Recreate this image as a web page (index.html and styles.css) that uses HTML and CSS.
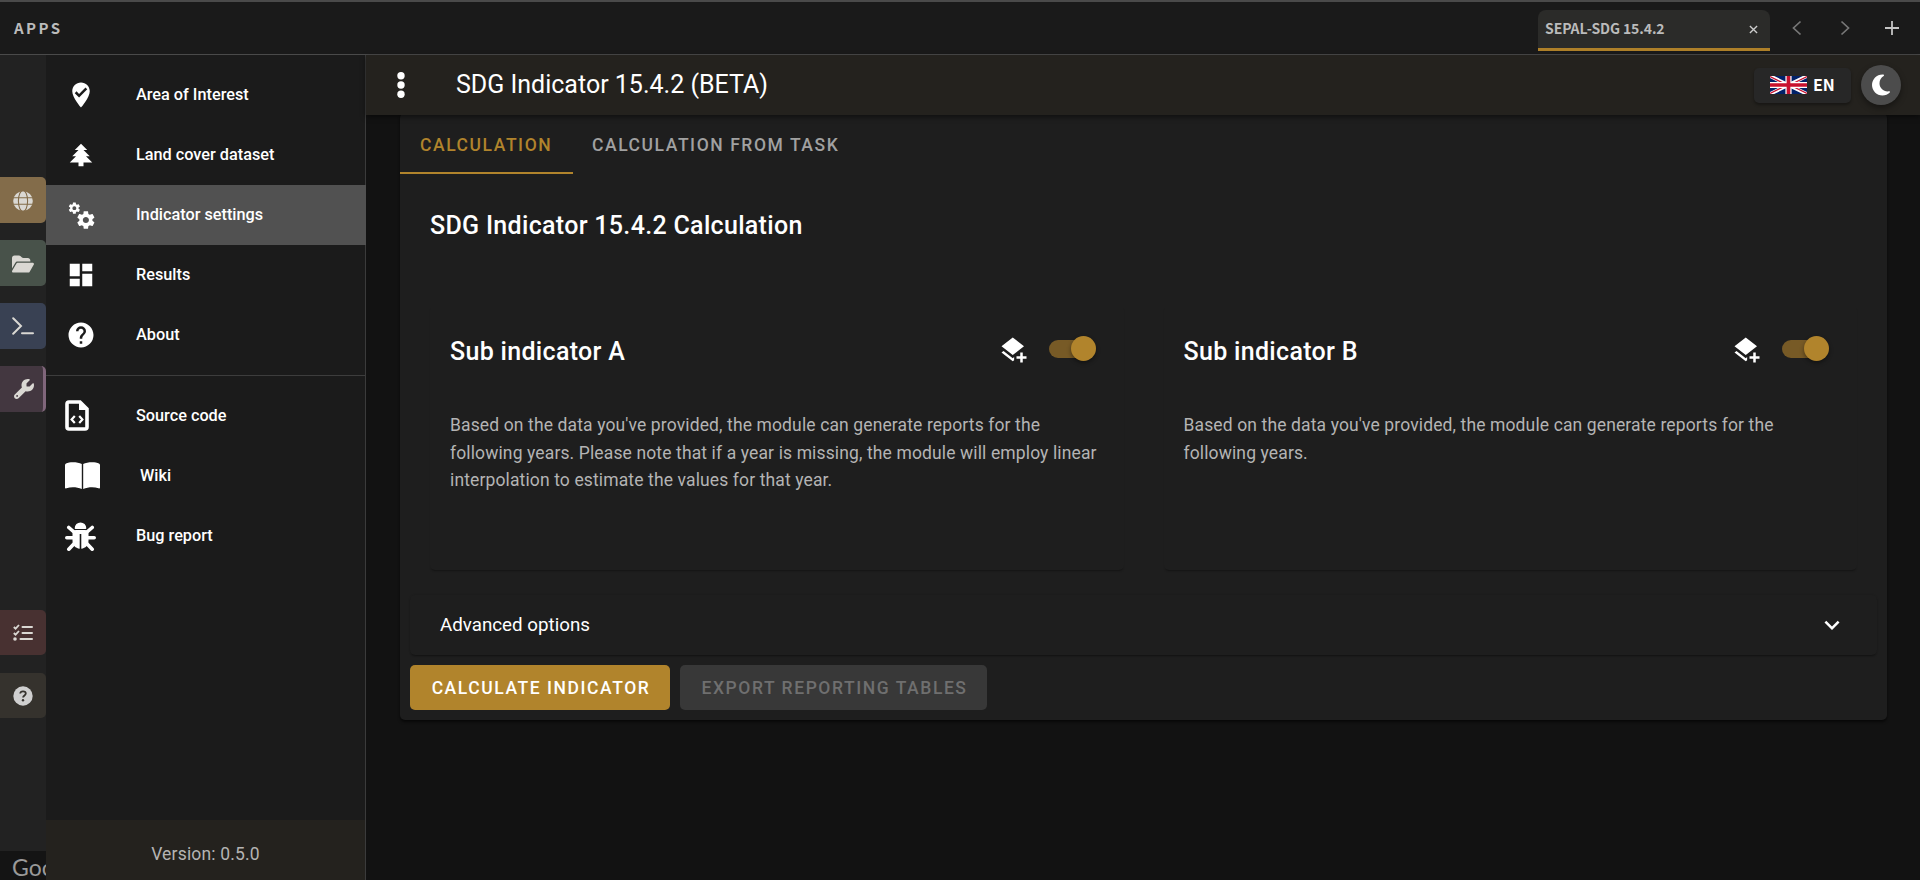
FILE: index.html
```html
<!DOCTYPE html>
<html lang="en">
<head>
<meta charset="utf-8">
<title>SEPAL - SDG Indicator 15.4.2</title>
<link rel="stylesheet" href="styles.css">
</head>
<body>
<header class="topbar">
  <div class="topbar-title">APPS</div>
  <div class="topbar-tabs">
    <div class="app-tab"><span>SEPAL-SDG 15.4.2</span>
      <svg class="close" viewBox="0 0 10 10"><path d="M1 1l8 8M9 1l-8 8"/></svg>
    </div>
    <svg class="nav-arrow" viewBox="0 0 10 16"><path d="M8.500 1.500L1.500 8l7 6.500"/></svg>
    <svg class="nav-arrow next" viewBox="0 0 10 16"><path d="M1.500 1.500L8.500 8l-7 6.500"/></svg>
    <svg class="plus" viewBox="0 0 14 14"><path d="M7 0v14M0 7h14"/></svg>
  </div>
</header>
<div class="workspace">
  <aside class="rail">
    <div class="rail-group">
      <div class="tile globe"><svg viewBox="0 0 20 20"><circle cx="10" cy="10" r="9.800" fill="#dad8d3"/><g fill="none" stroke="#836c4a" stroke-width="1.100"><ellipse cx="10" cy="10" rx="4.600" ry="10.500"/><path d="M0 6.700h20M0 13.300h20"/></g></svg></div>
      <div class="tile folder"><svg viewBox="0 0 576 512"><path fill="#dad8d3" d="M88.700 223.800L0 375.800V96c0-35.300 28.700-64 64-64h117.500c17 0 33.300 6.700 45.300 18.700l26.500 26.500c12 12 28.300 18.700 45.300 18.700H416c35.300 0 64 28.700 64 64v32H144c-22.800 0-43.800 12.100-55.300 31.800zm27.600 16.100C122.100 230 132.600 224 144 224h400c11.500 0 22 6.100 27.700 16.100s5.700 22.200-.1 32.100l-112 192C453.900 474 443.400 480 432 480H32c-11.500 0-22-6.100-27.700-16.100s-5.700-22.200.1-32.100l112-192z"/></svg></div>
      <div class="tile terminal"><svg viewBox="0 0 22 20"><path d="M1.200 2.200L9 10l-7.800 7.800M10 17.200h11" fill="none" stroke="#dad8d3" stroke-width="2" stroke-linecap="round"/></svg></div>
      <div class="tile wrench"><svg viewBox="0 0 512 512"><path fill="#dad8d3" d="M352 320c88.400 0 160-71.600 160-160 0-15.300-2.200-30.100-6.200-44.200-3.100-10.800-16.400-13.200-24.300-5.300l-76.800 76.800c-3 3-7.100 4.700-11.300 4.700H336c-8.800 0-16-7.200-16-16v-57.400c0-4.200 1.700-8.300 4.700-11.300l76.800-76.800c7.900-7.900 5.400-21.200-5.300-24.300C382.100 2.200 367.300 0 352 0c-88.400 0-160 71.600-160 160 0 19.100 3.400 37.500 9.500 54.500L19.900 396.100C7.200 408.800 0 426.100 0 444.100 0 481.600 30.400 512 67.900 512c18 0 35.300-7.200 48-19.900l181.600-181.600c17 6.200 35.400 9.500 54.500 9.500zM80 408a24 24 0 1 1 0 48 24 24 0 1 1 0-48z"/></svg></div>
    </div>
    <div class="rail-group lower">
      <div class="tile tasks"><svg viewBox="0 0 20 20"><g fill="none" stroke="#dad8d3" stroke-width="1.800"><path d="M.8 4l1.800 1.700L6 2M.8 10l1.800 1.700L6 8"/><path d="M9.500 4h9.500M9.500 10h9.500M7.500 16h11.500" stroke-linecap="round" stroke-width="2"/></g><circle cx="2" cy="16" r="1.800" fill="#dad8d3"/></svg></div>
      <div class="tile help"><svg viewBox="0 0 20 20"><circle cx="10" cy="10" r="9.700" fill="#cfcfcf"/><path d="M7.200 7.500c.2-1.600 1.300-2.200 2.800-2.200 1.700 0 2.800.8 2.800 2.200 0 1.900-2.700 2-2.700 4" fill="none" stroke="#35322d" stroke-width="1.800"/><circle cx="10" cy="14.300" r="1.200" fill="#35322d"/></svg></div>
    </div>
    <div class="map-credit">Google</div>
  </aside>
  <nav class="drawer">
    <ul class="menu pages">
      <li><i><svg class="mdi" viewBox="0 0 24 24"><path d="M12,2C15.860,2 19,5.140 19,9C19,14.250 12,22 12,22C12,22 5,14.250 5,9C5,5.140 8.140,2 12,2M10.470,14L17,7.410L15.600,6L10.470,11.180L8.400,9.090L7,10.500L10.470,14Z"/></svg></i>Area of Interest</li>
      <li><i><svg class="mdi" viewBox="0 0 24 24"><path d="M10,21V18H3L8,13H5L10,8H7L12,3L17,8H14L19,13H16L21,18H14V21H10Z"/></svg></i>Land cover dataset</li>
      <li class="active"><i><svg class="mdi" viewBox="0 0 24 24"><path d="M15.900,18.450C17.250,18.450 18.350,17.350 18.350,16C18.350,14.650 17.250,13.550 15.900,13.550C14.540,13.550 13.450,14.650 13.450,16C13.450,17.350 14.540,18.450 15.900,18.450M21.100,16.680L22.580,17.840C22.710,17.950 22.750,18.130 22.660,18.290L21.260,20.710C21.170,20.860 21,20.920 20.830,20.860L19.090,20.160C18.730,20.440 18.330,20.670 17.910,20.850L17.640,22.700C17.620,22.870 17.470,23 17.300,23H14.500C14.320,23 14.180,22.870 14.150,22.700L13.890,20.850C13.460,20.670 13.070,20.440 12.710,20.160L10.960,20.860C10.810,20.920 10.620,20.860 10.540,20.710L9.140,18.290C9.050,18.130 9.090,17.950 9.220,17.840L10.700,16.680L10.650,16L10.700,15.310L9.220,14.160C9.090,14.050 9.050,13.860 9.140,13.710L10.540,11.290C10.620,11.130 10.810,11.070 10.960,11.130L12.710,11.840C13.070,11.560 13.460,11.320 13.890,11.150L14.150,9.290C14.180,9.130 14.320,9 14.500,9H17.300C17.470,9 17.620,9.130 17.640,9.290L17.910,11.150C18.330,11.320 18.730,11.560 19.090,11.840L20.830,11.130C21,11.070 21.170,11.130 21.260,11.290L22.660,13.710C22.750,13.860 22.710,14.050 22.580,14.160L21.100,15.310L21.150,16L21.100,16.680M6.690,8.070C7.560,8.070 8.260,7.370 8.260,6.500C8.260,5.630 7.560,4.920 6.690,4.920A1.580,1.580 0 0,0 5.110,6.500C5.110,7.370 5.820,8.070 6.690,8.070M10.030,6.940L11,7.680C11.070,7.750 11.090,7.870 11.030,7.970L10.130,9.530C10.080,9.630 9.960,9.670 9.860,9.630L8.740,9.180L8,9.620L7.810,10.810C7.790,10.920 7.700,11 7.590,11H5.790C5.670,11 5.580,10.920 5.560,10.810L5.400,9.620L4.640,9.180L3.520,9.630C3.410,9.670 3.300,9.630 3.240,9.530L2.340,7.970C2.280,7.870 2.310,7.750 2.390,7.680L3.340,6.940L3.310,6.500L3.340,6.060L2.390,5.320C2.310,5.250 2.280,5.130 2.340,5.030L3.240,3.470C3.300,3.370 3.410,3.330 3.520,3.370L4.640,3.820L5.400,3.380L5.560,2.190C5.580,2.080 5.670,2 5.790,2H7.590C7.700,2 7.790,2.080 7.810,2.190L8,3.380L8.740,3.820L9.860,3.370C9.960,3.330 10.080,3.370 10.130,3.470L11.030,5.030C11.090,5.130 11.070,5.250 11,5.320L10.030,6.060L10.060,6.500L10.030,6.940Z"/></svg></i>Indicator settings</li>
      <li><i><svg class="mdi" viewBox="0 0 24 24"><path d="M13,3V9H21V3M13,21H21V11H13M3,21H11V15H3M3,13H11V3H3V13Z"/></svg></i>Results</li>
      <li><i><svg class="mdi" viewBox="0 0 24 24"><path d="M15.070,11.250L14.170,12.170C13.450,12.890 13,13.500 13,15H11V14.500C11,13.390 11.450,12.390 12.170,11.670L13.410,10.410C13.780,10.050 14,9.550 14,9C14,7.890 13.100,7 12,7A2,2 0 0,0 10,9H8A4,4 0 0,1 12,5A4,4 0 0,1 16,9C16,9.880 15.640,10.670 15.070,11.250M13,19H11V17H13M12,2A10,10 0 0,0 2,12A10,10 0 0,0 12,22A10,10 0 0,0 22,12C22,6.470 17.500,2 12,2Z"/></svg></i>About</li>
    </ul>
    <ul class="menu links">
      <li><i><svg width="24" height="31" viewBox="0 0 24 31"><path d="M4 2h11l7 7v18a2 2 0 0 1-2 2H4a2 2 0 0 1-2-2V4a2 2 0 0 1 2-2z" fill="none" stroke="#fff" stroke-width="3.600"/><path d="M14 2v8h8.500l-1-2-5.500-5z"/><path d="M9.800 16l-3.200 3.500 3.200 3.500M14.200 16l3.200 3.500-3.200 3.500" fill="none" stroke="#fff" stroke-width="2.200"/></svg></i>Source code</li>
      <li><i><svg width="35" height="27" viewBox="0 0 35 27"><path d="M16.800 2C13 0 5 -.5 1 1.500Q0 2 0 3v22.500q0 1.300 1.500 .8C6 24.700 12 25 16.800 27zM18.200 2C22 0 30 -.5 34 1.500q1 .5 1 1.500v22.500q0 1.300-1.500 .8C29 24.700 23 25 18.200 27z"/></svg></i><span class="wiki">Wiki</span></li>
      <li><i><svg width="31" height="31" viewBox="0 0 31 31"><path d="M9.700 8.200a5.800 5.800 0 0 1 11.600 0q0 .8-.8 .8h-10q-.8 0-.8-.8z"/><path d="M7.500 13.500q0-3.500 3.500-3.500h9q3.500 0 3.500 3.500v7c0 5-3 7.500-7.200 8.300V14h-1.600v14.800C10.500 28 7.500 25.500 7.500 20.500z"/><path d="M3.800 7.500L9 12M27.200 7.500L22 12M1.800 17.800h6.700M22.500 17.800h6.700M3.800 29.200l5.700-6M27.200 29.200l-5.700-6" fill="none" stroke="#fff" stroke-width="3.600" stroke-linecap="round"/></svg></i>Bug report</li>
    </ul>
    <div class="version">Version: 0.5.0</div>
  </nav>
  <main class="main">
    <div class="appbar">
      <svg class="dots" viewBox="0 0 8 26"><circle cx="4" cy="3.700" r="3.700"/><circle cx="4" cy="13" r="3.700"/><circle cx="4" cy="22.300" r="3.700"/></svg>
      <h1>SDG Indicator 15.4.2 (BETA)</h1>
      <div class="lang">
        <svg class="flag" viewBox="0 0 60 30" preserveAspectRatio="none"><path d="M0 0h60v30H0z" fill="#012169"/><path d="M0 0l60 30M60 0L0 30" stroke="#fff" stroke-width="6"/><path d="M0 1l28 14M60 1L32 15M60 29L32 15M0 29l28-14" stroke="#c8102e" stroke-width="2"/><path d="M30 0v30M0 15h60" stroke="#fff" stroke-width="10"/><path d="M30 0v30M0 15h60" stroke="#c8102e" stroke-width="6"/></svg>
        <span>EN</span>
      </div>
      <div class="theme"><svg viewBox="0 0 384 512"><path d="M223.500 32C100 32 0 132.300 0 256s100 224 223.500 224c60.600 0 115.500-24.200 155.800-63.400 5-4.900 6.300-12.500 3.100-18.700s-10.100-9.700-17-8.500c-9.800 1.700-19.800 2.600-30.100 2.600-96.900 0-175.500-78.800-175.500-176 0-65.800 36-123.100 89.300-153.300 6.100-3.500 9.200-10.500 7.700-17.300s-7.300-11.900-14.300-12.500c-6.300-.5-12.600-.8-19-.8z"/></svg></div>
    </div>
    <section class="card">
      <div class="tabs"><div class="tab on">CALCULATION</div><div class="tab">CALCULATION FROM TASK</div></div>
      <h2>SDG Indicator 15.4.2 Calculation</h2>
      <div class="subs">
        <article class="sub">
          <div class="sub-head"><h3>Sub indicator A</h3>
            <svg class="layers" viewBox="0 0 24 24"><path d="M17,14H19V17H22V19H19V22H17V19H14V17H17V14M11,16L2,9L11,2L20,9L11,16M11,18.540L12.100,17.690V20.210L11,21.070L2,14.070L3.620,12.810L11,18.540Z"/></svg>
            <div class="switch"><div class="thumb"></div></div>
          </div>
          <p>Based on the data you've provided, the module can generate reports for the following years. Please note that if a year is missing, the module will employ linear interpolation to estimate the values for that year.</p>
        </article>
        <article class="sub">
          <div class="sub-head"><h3>Sub indicator B</h3>
            <svg class="layers" viewBox="0 0 24 24"><path d="M17,14H19V17H22V19H19V22H17V19H14V17H17V14M11,16L2,9L11,2L20,9L11,16M11,18.540L12.100,17.690V20.210L11,21.070L2,14.070L3.620,12.810L11,18.540Z"/></svg>
            <div class="switch"><div class="thumb"></div></div>
          </div>
          <p>Based on the data you've provided, the module can generate reports for the following years.</p>
        </article>
      </div>
      <div class="advanced">Advanced options<svg viewBox="0 0 24 24"><path d="M7.410,8.580L12,13.170L16.590,8.580L18,10L12,16L6,10L7.410,8.580Z"/></svg></div>
      <div class="actions"><button class="primary">CALCULATE INDICATOR</button><button class="disabled" disabled>EXPORT REPORTING TABLES</button></div>
    </section>
  </main>
</div>
</body>
</html>
```

FILE: styles.css
```css
* { box-sizing: border-box; }
body { margin: 0; height: 880px; overflow: hidden; display: flex; flex-direction: column; background: #121212; color: #fff; font-family: Roboto, sans-serif; }
h1, h2, h3, p, ul { margin: 0; padding: 0; }
svg { display: block; fill: #fff; flex: none; }

.topbar { height: 55px; flex: none; border-top: 2px solid #4a4a4a; border-bottom: 1px solid #4a4a4a; background: #1a1a1a; display: flex; justify-content: space-between; font-family: "Noto Sans CJK SC", sans-serif; font-weight: 700; color: #bbb; }
.topbar-title { padding-left: 14px; font-size: 15px; letter-spacing: 2.4px; line-height: 52px; }
.topbar-tabs { display: flex; align-items: center; padding-right: 21px; }
.app-tab { width: 232px; height: 41px; margin: 5px 22px 0 0; padding: 0 12px 0 7px; display: flex; align-items: center; justify-content: space-between; background: #2b2b29; border-bottom: 3px solid #ae8029; border-radius: 8px 8px 0 0; font-size: 14px; line-height: 20px; }
.app-tab span { margin-top: -2px; letter-spacing: -.1px; }
.close { width: 9px; height: 9px; fill: none; stroke: #ccc; stroke-width: 1.5; }
.nav-arrow { width: 10px; height: 16px; fill: none; stroke: #777; stroke-width: 1.7; margin-right: 38px; }
.nav-arrow.next { margin-right: 35px; }
.plus { width: 14px; height: 14px; stroke: #c4c4c4; stroke-width: 1.8; }

.workspace { flex: 1; min-height: 0; display: flex; }
.rail { width: 46px; flex: none; background: #222; display: flex; flex-direction: column; overflow: hidden; }
.rail-group { display: flex; flex-direction: column; gap: 17px; padding-top: 122px; }
.rail-group.lower { padding-top: 198px; gap: 18px; }
.tile { height: 46px; display: flex; align-items: center; padding-left: 13px; border-radius: 0 5px 5px 0; }
.lower .tile { height: 45px; }
.tile svg { width: 20px; height: 20px; }
.globe { background: #836c4a; padding-top: 2px; }
.folder { background: #48524a; padding-left: 12px; padding-top: 2px; }
.folder svg { width: 22px; }
.terminal { background: #394153; padding-left: 12px; }
.terminal svg { width: 22px; }
.wrench { background: #433740; border-right: 3px solid #80667b; padding-left: 14px; }
.tasks { background: #483131; padding-top: 1px; }
.help { background: #35322d; }
.map-credit { margin-top: auto; height: 29px; padding-left: 12px; background: #141414; color: #999; font: 23px/33px Lato, sans-serif; white-space: nowrap; }

.drawer { width: 320px; flex: none; background: #1b1b1b; border-right: 1px solid #3b3b3b; display: flex; flex-direction: column; }
.menu { list-style: none; padding: 10px 0; font-size: 16.25px; font-weight: 500; }
.menu li { height: 60px; display: flex; align-items: center; padding-left: 20px; margin-right: -1px; }
.pages li { padding-bottom: 1px; }
.menu li.active { background: #515151; }
.menu i { width: 70px; flex: none; display: flex; }
.mdi { width: 30px; height: 30px; }
.links { border-top: 1px solid #3d3d3d; padding-top: 9px; }
.links i { margin-left: -1px; width: 71px; }
.links li { padding-top: 1px; }
.wiki { padding-left: 4px; }
.version { margin: auto -1px 0 0; height: 60px; background: #24221e; color: #b5b4b3; border-right: 1px solid #3b3b3b; text-align: center; font-size: 17.5px; line-height: 68px; letter-spacing: .17px; }

.main { flex: 1; min-width: 0; display: flex; flex-direction: column; }
.appbar { z-index: 1; height: 60px; flex: none; display: flex; align-items: center; padding: 0 19px 0 31px; background: #24221e; box-shadow: 0 2px 5px rgba(0,0,0,.5); }
.dots { width: 8px; height: 26px; }
.appbar h1 { margin: 0 auto 0 51px; font-size: 25px; font-weight: 400; line-height: 30px; }
.lang { width: 97px; height: 35px; display: flex; align-items: center; padding: 0 0 1px 16px; gap: 6px; border-radius: 5px; background: #272727; box-shadow: 0 2px 3px rgba(0,0,0,.35); font: 700 16px/20px "Noto Sans CJK SC", sans-serif; }
.lang span { margin-top: -1px; }
.flag { width: 37px; height: 18px; }
.theme { width: 40px; height: 40px; margin-left: 10px; border-radius: 50%; background: #4c4c4c; box-shadow: 0 3px 6px rgba(0,0,0,.4); display: flex; align-items: center; justify-content: center; }
.theme svg { width: 18px; height: 24px; }

.card { margin: -2px 33px 0 34px; height: 607px; padding: 1px 10px 10px; background: #1e1e1e; border-radius: 5px; box-shadow: 0 2px 3px rgba(0,0,0,.6); display: flex; flex-direction: column; }
.tabs { display: flex; height: 60px; flex: none; margin: 0 -10px; }
.tab { padding: 0 20px; line-height: 63px; font-size: 17.5px; font-weight: 500; letter-spacing: 1.5625px; color: #a1a1a1; }
.tab.on { width: 173px; padding-right: 0; margin-right: -1px; color: #b1842c; border-bottom: 2px solid #b1842c; white-space: nowrap; }
.card h2 { margin: 32px 20px 0; font-size: 25px; line-height: 40px; font-weight: 500; letter-spacing: .3125px; }
.subs { display: grid; grid-template-columns: 1fr 1fr; gap: 40px; margin: 59px 20px 0; }
.sub { height: 265px; padding: 20px; border-radius: 5px; box-shadow: 0 2px 2px -1px rgba(0,0,0,.35); }
.sub-head { display: flex; align-items: center; height: 50px; }
.sub h3 { margin: 3px auto 0 0; font-size: 25px; line-height: 40px; font-weight: 500; letter-spacing: .3125px; }
.layers { width: 30px; height: 30px; margin-right: 20px; }
.switch { width: 45px; height: 18px; margin: 0 10px 3px 0; border-radius: 9px; background: #775a26; display: flex; justify-content: flex-end; align-items: center; }
.thumb { width: 25px; height: 25px; flex: none; margin-right: -2px; border-radius: 50%; background: #b1842c; box-shadow: 0 2px 4px rgba(0,0,0,.4); }
.sub p { margin-top: 37px; font-size: 17.5px; line-height: 27.5px; color: #b4b4b4; letter-spacing: .125px; }
.advanced { height: 60px; margin-top: 25px; padding: 0 30px; display: flex; align-items: center; justify-content: space-between; border-radius: 5px; font-size: 18.75px; box-shadow: 0 2px 2px -1px rgba(0,0,0,.35), 0 0 2px rgba(0,0,0,.15); }
.advanced svg { width: 30px; height: 30px; }
.actions { display: flex; gap: 10px; margin-top: 10px; }
.actions button { height: 45px; border: 0; border-radius: 5px; padding: 0 0 0 2px; font: 500 17.5px Roboto, sans-serif; letter-spacing: 1.5625px; }
.primary { width: 260px; background: #b1842c; color: #fff; }
.disabled { width: 307px; background: #383838; color: #6f6f6f; }
```
